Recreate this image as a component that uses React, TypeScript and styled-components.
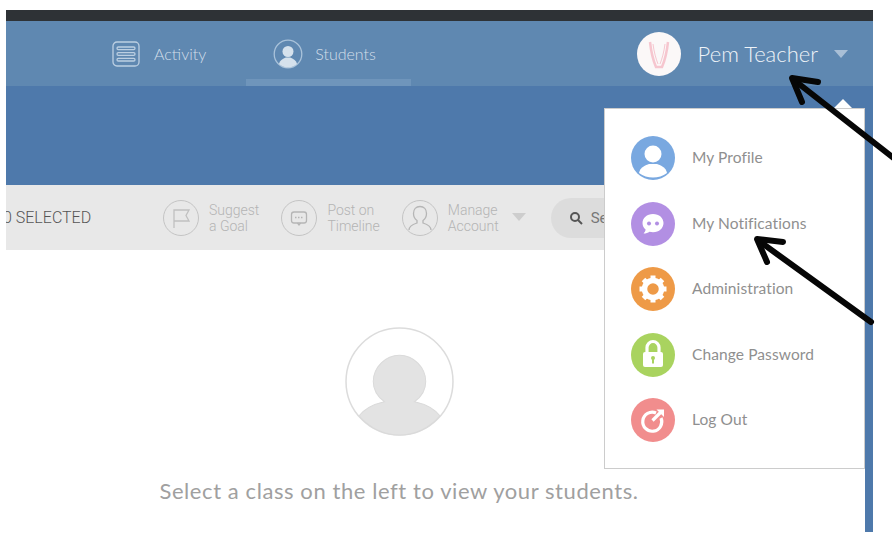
import styled, { createGlobalStyle } from 'styled-components';
import type { ReactNode } from 'react';

const GlobalStyle = createGlobalStyle`
  html, body {
    margin: 0;
    background: #fff;
  }
  * {
    box-sizing: border-box;
  }
`;

const PersonGlyph = () => (
  <svg viewBox="0 0 44 44" width="44" height="44">
    <circle cx="22" cy="18" r="8.5" fill="#fff" />
    <path d="M8 37c1-6 7-8 10-9h8c3 1 9 3 10 9-4 3-9 4.500-14 4.500S12 40 8 37z" fill="#fff" />
  </svg>
);

const ChatGlyph = () => (
  <svg viewBox="0 0 44 44" width="44" height="44">
    <path d="M22 12c-6.200 0-10.500 4-10.500 9 0 2.700 1.200 5 3.100 6.600-.2 1.600-1 2.900-2 3.900 2.400 0 4.400-.8 5.900-1.800 1.100.3 2.300.5 3.500.5 6.200 0 10.500-4.100 10.500-9.200S28.200 12 22 12z" fill="#fff" />
    <circle cx="18" cy="21.500" r="2" fill="#b28fe3" />
    <circle cx="26" cy="21.500" r="2" fill="#b28fe3" />
  </svg>
);

const GearGlyph = () => (
  <svg viewBox="0 0 44 44" width="44" height="44">
    <circle cx="22" cy="22" r="8.500" fill="none" stroke="#fff" strokeWidth="5.500" />
    <g stroke="#fff" strokeWidth="5">
      <path d="M22 8.500v5M22 30.500v5M8.500 22h5M30.500 22h5M12.500 12.500l3.500 3.500M28 28l3.500 3.500M12.500 31.500l3.500-3.500M28 16l3.500-3.500" />
    </g>
  </svg>
);

const LockGlyph = () => (
  <svg viewBox="0 0 44 44" width="44" height="44">
    <path d="M16 20v-5.500a6 6 0 0 1 12 0V20" fill="none" stroke="#fff" strokeWidth="3.200" />
    <rect x="12" y="19" width="20" height="15" rx="2" fill="#fff" />
    <circle cx="22" cy="25" r="2" fill="#a9d35f" />
    <rect x="21" y="25.500" width="2" height="5" fill="#a9d35f" />
  </svg>
);

const LogoutGlyph = () => (
  <svg viewBox="0 0 44 44" width="44" height="44">
    <path d="M25 15a9.500 9.500 0 1 0 5 5" fill="none" stroke="#fff" strokeWidth="3.200" />
    <path d="M21.500 22.500 30 14" stroke="#fff" strokeWidth="3.200" fill="none" />
    <path d="M25.500 11.500h7.500V19z" fill="#fff" />
  </svg>
);

const menuItems: { label: string; color: string; icon: ReactNode }[] = [
  { label: 'My Profile', color: '#79a8e0', icon: <PersonGlyph /> },
  { label: 'My Notifications', color: '#b28fe3', icon: <ChatGlyph /> },
  { label: 'Administration', color: '#ee9a47', icon: <GearGlyph /> },
  { label: 'Change Password', color: '#a9d35f', icon: <LockGlyph /> },
  { label: 'Log Out', color: '#f18d8d', icon: <LogoutGlyph /> },
];

function App() {
  return (
    <Page>
      <GlobalStyle />
      <Frame>
        <DarkBar />
        <Nav>
          <NavLinks>
            <NavLink>
              <svg viewBox="0 0 28 26" width="28" height="26" fill="none" stroke="#bccfe2" strokeWidth="1.300">
                <rect x="1" y="1" width="26" height="24" rx="4" />
                <rect x="5" y="6" width="18" height="2.600" rx="1.300" />
                <rect x="5" y="11.700" width="18" height="2.600" rx="1.300" />
                <rect x="5" y="17.400" width="18" height="2.600" rx="1.300" />
              </svg>
              <NavLabel>Activity</NavLabel>
            </NavLink>
            <NavLink $active>
              <svg viewBox="0 0 30 30" width="30" height="30">
                <circle cx="15" cy="15" r="13.800" fill="none" stroke="#a9c2da" strokeWidth="1.300" />
                <circle cx="15" cy="12.500" r="5.500" fill="#d5e1ec" />
                <path d="M6 25c1-4 5-6 7-6.500h4c2 .5 6 2.500 7 6.500-2.500 2.200-5.500 3.500-9 3.500s-6.500-1.300-9-3.500z" fill="#d5e1ec" />
              </svg>
              <NavLabel>Students</NavLabel>
            </NavLink>
          </NavLinks>
          <UserBlock>
            <Avatar>
              <svg viewBox="0 0 44 44" width="44" height="44" fill="none" stroke="#f6c6cf" strokeWidth="2.500">
                <path d="M13 10c1 9 3 18 6 25h6c3-7 5-16 6-25" />
                <path d="M16 12c1 8 3 15 5 20M28 12c-1 8-3 15-5 20" strokeWidth="1" />
              </svg>
            </Avatar>
            <UserName>Pem Teacher</UserName>
            <Caret $color="#a9bfd6" />
          </UserBlock>
        </Nav>
        <Hero />
        <Content>
          <Toolbar>
            <Selected>0 SELECTED</Selected>
            <ToolGroup>
              <Tool>
                <ToolCircle>
                  <svg viewBox="0 0 34 34" width="34" height="34" fill="none" stroke="#c0c0c0" strokeWidth="1.300">
                    <path d="M10 27V9h15l-3 5.500L25 20H10" />
                  </svg>
                </ToolCircle>
                <ToolText>Suggest<br />a Goal</ToolText>
              </Tool>
              <Tool>
                <ToolCircle>
                  <svg viewBox="0 0 34 34" width="34" height="34" fill="none" stroke="#b5b5b5" strokeWidth="1.300">
                    <rect x="9.500" y="11" width="15" height="11" rx="2.500" />
                    <path d="M15.500 22l1.500 2 1.500-2" />
                    <path d="M13 16.500h8" strokeDasharray="1.500 1.500" />
                  </svg>
                </ToolCircle>
                <ToolText>Post on<br />Timeline</ToolText>
              </Tool>
              <Tool>
                <ToolCircle>
                  <svg viewBox="0 0 34 34" width="34" height="34" fill="none" stroke="#b5b5b5" strokeWidth="1.300">
                    <path d="M6 29c0-4 5-6 8-7v-2.500c-2-1.500-3.500-3.500-3.500-7 0-4 2.500-7 6.500-7s6.500 3 6.500 7c0 3.500-1.500 5.500-3.500 7V22c3 1 8 3 8 7" />
                  </svg>
                </ToolCircle>
                <ToolText>Manage<br />Account</ToolText>
                <ToolCaret $color="#cdcdcd" />
              </Tool>
            </ToolGroup>
            <SearchPill>
              <svg viewBox="0 0 14 14" width="14" height="14" fill="none" stroke="#555" strokeWidth="2">
                <circle cx="6" cy="6" r="4" />
                <path d="M9 9l4 4" />
              </svg>
              <span>Search</span>
            </SearchPill>
          </Toolbar>
          <EmptyState>
            <EmptyAvatar>
              <svg viewBox="0 0 108 108" width="109" height="109">
                <circle cx="54" cy="54" r="53" fill="#fff" stroke="#dcdcdc" strokeWidth="1.500" />
                <path d="M14 88c6-8 16-12 25-14-7-5-11-12-11-20 0-14 12-26 26-26s26 12 26 26c0 8-4 15-11 20 9 2 19 6 25 14-10 12-25 19-40 19s-30-7-40-19z" fill="#e3e3e3" stroke="#dadada" />
              </svg>
            </EmptyAvatar>
            <EmptyText>Select a class on the left to view your students.</EmptyText>
          </EmptyState>
        </Content>
        <UserMenu>
          {menuItems.map((item) => (
            <MenuRow key={item.label}>
              <MenuIcon $color={item.color}>{item.icon}</MenuIcon>
              <MenuLabel>{item.label}</MenuLabel>
            </MenuRow>
          ))}
        </UserMenu>
      </Frame>
      <Arrows viewBox="0 0 892 544" width="892" height="544">
        <g stroke="#060606" strokeWidth="6" fill="none" strokeLinecap="round" strokeLinejoin="round">
          <path d="M900 163 794 80" />
          <path d="M818 82 792 78 802 102" />
          <path d="M871 322 759 241" />
          <path d="M783 242 757 239 767 262" />
        </g>
      </Arrows>
    </Page>
  );
}

const Page = styled.div`
  position: relative;
  width: 892px;
  height: 544px;
  padding: 10px 19px 12px 6px;
  overflow: hidden;
  background: #fff;
`;

const Frame = styled.div`
  position: relative;
  display: flex;
  flex-direction: column;
  height: 100%;
  overflow: hidden;
`;

const DarkBar = styled.div`
  height: 11px;
  flex: none;
  background: #2e3236;
`;

const Nav = styled.nav`
  display: flex;
  align-items: stretch;
  justify-content: space-between;
  height: 65px;
  flex: none;
  padding: 0 25px 0 106px;
  background: #5f88b1;
`;

const NavLinks = styled.div`
  display: flex;
  gap: 40px;
`;

const NavLink = styled.div<{ $active?: boolean }>`
  display: flex;
  align-items: center;
  gap: ${(p) => (p.$active ? '12px' : '14px')};
  width: ${(p) => (p.$active ? '165px' : 'auto')};
  padding: 7px 0 0 ${(p) => (p.$active ? '27px' : '0')};
  border-bottom: 7px solid ${(p) => (p.$active ? '#6f95bb' : 'transparent')};
`;

const NavLabel = styled.span`
  font-family: Lato, sans-serif;
  font-size: 16px;
  font-weight: 300;
  color: #d3dfea;
`;

const UserBlock = styled.div`
  display: flex;
  align-items: center;
`;

const Avatar = styled.div`
  width: 44px;
  height: 44px;
  border-radius: 50%;
  background: #fbf8f8;
  svg {
    display: block;
  }
`;

const UserName = styled.span`
  margin: 0 16px 0 17px;
  font-family: Lato, sans-serif;
  font-size: 22px;
  font-weight: 300;
  color: #eef3f8;
  white-space: nowrap;
`;

const Caret = styled.span<{ $color: string }>`
  width: 0;
  height: 0;
  border-left: 7px solid transparent;
  border-right: 7px solid transparent;
  border-top: 8px solid ${(p) => p.$color};
`;

const ToolCaret = styled(Caret)`
  margin: 0 0 2px 3px;
`;

const Hero = styled.div`
  height: 99px;
  flex: none;
  background: #4e79ab;
`;

const Content = styled.div`
  display: flex;
  flex-direction: column;
  flex: 1;
  border-right: 8px solid #4e79ab;
  background: #fff;
`;

const Toolbar = styled.div`
  display: flex;
  align-items: center;
  height: 65px;
  flex: none;
  background: #e8e8e8;
  overflow: hidden;
`;

const Selected = styled.span`
  margin-left: -3px;
  width: 160px;
  flex: none;
  font-family: Roboto, sans-serif;
  font-size: 16px;
  font-weight: 300;
  color: #555;
  white-space: nowrap;
`;

const ToolGroup = styled.div`
  display: flex;
  gap: 22px;
`;

const Tool = styled.div`
  display: flex;
  align-items: center;
  gap: 10px;
`;

const ToolCircle = styled.div`
  width: 36px;
  height: 36px;
  display: flex;
  align-items: center;
  justify-content: center;
  border: 1.500px solid #c4c4c4;
  border-radius: 50%;
  flex: none;
`;

const ToolText = styled.span`
  font-family: Roboto, sans-serif;
  font-size: 14px;
  font-weight: 300;
  line-height: 16px;
  color: #b4b4b4;
  white-space: nowrap;
`;

const SearchPill = styled.div`
  display: flex;
  align-items: center;
  gap: 8px;
  margin-left: 25px;
  width: 240px;
  height: 40px;
  padding-left: 18px;
  flex: none;
  border-radius: 20px;
  background: #dcdcdc;
  font-family: Roboto, sans-serif;
  font-size: 15px;
  color: #777;
`;

const EmptyState = styled.div`
  display: flex;
  flex-direction: column;
  align-items: center;
  padding-top: 77px;
  width: 786px;
`;

const EmptyAvatar = styled.div`
  width: 109px;
  height: 109px;
  svg {
    display: block;
  }
`;

const EmptyText = styled.p`
  margin: 41px 0 0;
  font-family: Lato, sans-serif;
  font-size: 22px;
  font-weight: 400;
  letter-spacing: 0.58px;
  color: #a0a0a0;
  white-space: nowrap;
`;

const UserMenu = styled.div`
  position: absolute;
  top: 98px;
  right: 8px;
  display: flex;
  flex-direction: column;
  gap: 21.500px;
  width: 261px;
  height: 361px;
  padding: 27px 26px;
  background: #fff;
  border: 1.500px solid #cccccc;
  &::before {
    content: '';
    position: absolute;
    top: -10px;
    right: 12px;
    border-left: 9px solid transparent;
    border-right: 9px solid transparent;
    border-bottom: 9px solid #fff;
  }
`;

const MenuRow = styled.div`
  display: flex;
  align-items: center;
  gap: 17px;
`;

const MenuIcon = styled.div<{ $color: string }>`
  width: 44px;
  height: 44px;
  flex: none;
  border-radius: 50%;
  overflow: hidden;
  background: ${(p) => p.$color};
  svg {
    display: block;
  }
`;

const MenuLabel = styled.span`
  margin-bottom: 2px;
  font-family: Lato, sans-serif;
  font-size: 15.500px;
  font-weight: 400;
  letter-spacing: 0.1px;
  color: #8f8f8f;
  white-space: nowrap;
`;

const Arrows = styled.svg`
  position: absolute;
  top: 0;
  left: 0;
  pointer-events: none;
`;

export default App;
